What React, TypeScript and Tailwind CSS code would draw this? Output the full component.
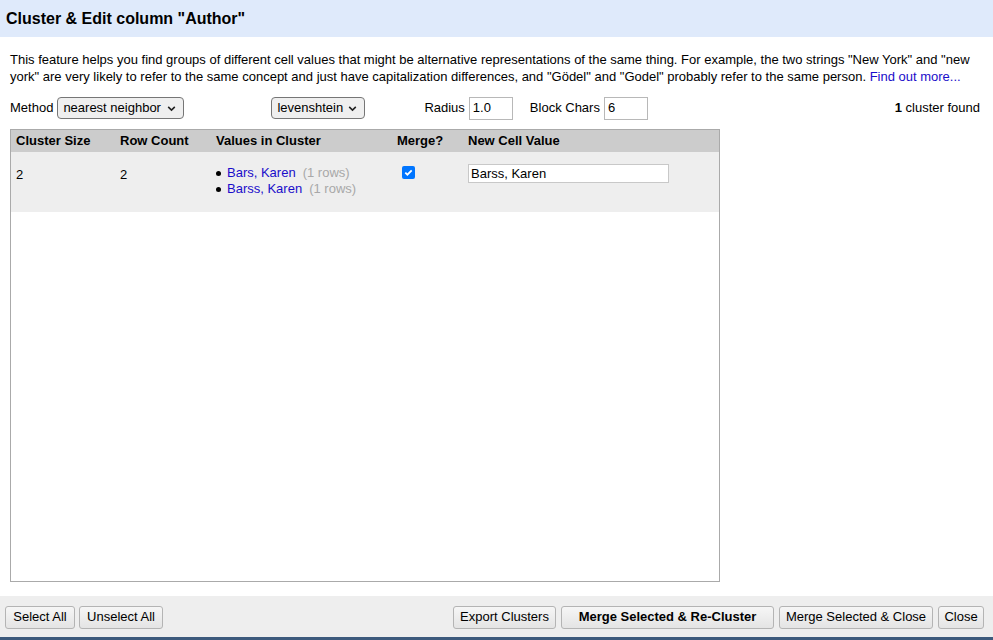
import React from 'react';

const font = { fontFamily: '"Liberation Sans", Arial, sans-serif' };

function Chevron() {
  return (
    <svg width="11" height="11" viewBox="0 0 10 10" className="ml-auto shrink-0">
      <path d="M2 3.5 L5 6.5 L8 3.5" fill="none" stroke="#222" strokeWidth="1.4" />
    </svg>
  );
}

function FakeSelect({ label, className }: { label: string; className?: string }) {
  return (
    <div
      className={`flex h-[22px] items-center whitespace-nowrap rounded-[4px] border border-[#767676] bg-[#efefef] pl-[5px] pr-[6px] text-[13px] text-black ${className ?? ''}`}
    >
      <span>{label}</span>
      <Chevron />
    </div>
  );
}

function Btn({ children, bold, className }: { children: React.ReactNode; bold?: boolean; className?: string }) {
  return (
    <button
      className={`h-[23px] shrink-0 whitespace-nowrap rounded-[3px] border border-[#b4b4b4] bg-gradient-to-b from-[#f6f6f6] to-[#e4e4e4] text-center text-[13px] text-black ${
        bold ? 'font-bold' : ''
      } ${className ?? ''}`}
    >
      {children}
    </button>
  );
}

function Checked() {
  return (
    <span className="flex h-[13px] w-[13px] items-center justify-center rounded-[2px] bg-[#0075ff]">
      <svg width="11" height="11" viewBox="0 0 11 11">
        <path d="M2.3 5.6 L4.4 7.7 L8.7 3.3" fill="none" stroke="#fff" strokeWidth="1.8" />
      </svg>
    </span>
  );
}

export default function App() {
  return (
    <div className="flex h-[640px] w-[993px] flex-col bg-white text-[13px] text-black" style={font}>
      <div className="flex h-[37px] shrink-0 items-center bg-[#dfeafb] pl-[6px] text-[16px] font-bold">
        Cluster &amp; Edit column "Author"
      </div>

      <div className="flex min-h-0 flex-1 flex-col px-[10px]">
        <p className="mt-[14px] leading-[17px]">
          This feature helps you find groups of different cell values that might be alternative representations of
          the same thing. For example, the two strings "New York" and "new york" are very likely to refer to the same
          concept and just have capitalization differences, and "Gödel" and "Godel" probably refer to the same
          person. <span className="text-[#1a0dca]">Find out more...</span>
        </p>

        <div className="mt-[11px] flex h-[24px] items-center">
          <span className="mr-[4px]">Method</span>
          <FakeSelect label="nearest neighbor" className="w-[127px]" />
          <FakeSelect label="levenshtein" className="ml-[87px] w-[94px]" />
          <span className="ml-[59px] mr-[4px]">Radius</span>
          <div className="flex h-[23px] w-[44px] items-center border border-[#b8b8b8] pl-[3px]">1.0</div>
          <span className="ml-[17px] mr-[4px]">Block Chars</span>
          <div className="flex h-[23px] w-[44px] items-center border border-[#b8b8b8] pl-[3px]">6</div>
          <span className="ml-auto pr-[3px]">
            <b>1</b> cluster found
          </span>
        </div>

        <div className="mt-[9px] flex h-[453px] w-[710px] flex-col border border-[#aaaaaa]">
          <div className="flex h-[22px] items-center bg-[#cccccc] font-bold">
            <div className="w-[109px] pl-[5px]">Cluster Size</div>
            <div className="w-[96px]">Row Count</div>
            <div className="w-[181px]">Values in Cluster</div>
            <div className="w-[71px]">Merge?</div>
            <div>New Cell Value</div>
          </div>
          <div className="flex h-[60px] items-start bg-[#eeeeee] pt-[13px]">
            <div className="w-[109px] pl-[5px]">2</div>
            <div className="w-[96px]">2</div>
            <div className="w-[181px] leading-[16px]">
              <div className="flex items-center">
                <span className="mr-[6px] h-[5px] w-[5px] rounded-full bg-black" />
                <span className="text-[#1a0dca]">Bars, Karen</span>
                <span className="ml-[7px] text-[#a8a8a8]">(1 rows)</span>
              </div>
              <div className="flex items-center">
                <span className="mr-[6px] h-[5px] w-[5px] rounded-full bg-black" />
                <span className="text-[#1a0dca]">Barss, Karen</span>
                <span className="ml-[7px] text-[#a8a8a8]">(1 rows)</span>
              </div>
            </div>
            <div className="w-[71px] pl-[5px] pt-[1px]">
              <Checked />
            </div>
            <div className="-mt-[1px] flex h-[19px] w-[201px] items-center border border-[#c8c8c8] bg-white pl-[2px]">
              Barss, Karen
            </div>
          </div>
          <div className="flex-1 bg-white" />
        </div>
      </div>

      <div className="flex h-[44px] shrink-0 items-center border-b-[3px] border-[#3d5a7c] bg-[#eeeeee] pl-[5px] pr-[9px] pt-[1px]">
        <Btn className="w-[70px]">Select All</Btn>
        <Btn className="ml-[4px] w-[84px]">Unselect All</Btn>
        <div className="flex-1" />
        <Btn className="w-[103px]">Export Clusters</Btn>
        <Btn bold className="ml-[5px] w-[213px]">
          Merge Selected &amp; Re-Cluster
        </Btn>
        <Btn className="ml-[5px] w-[154px]">Merge Selected &amp; Close</Btn>
        <Btn className="ml-[5px] w-[46px]">Close</Btn>
      </div>
    </div>
  );
}
